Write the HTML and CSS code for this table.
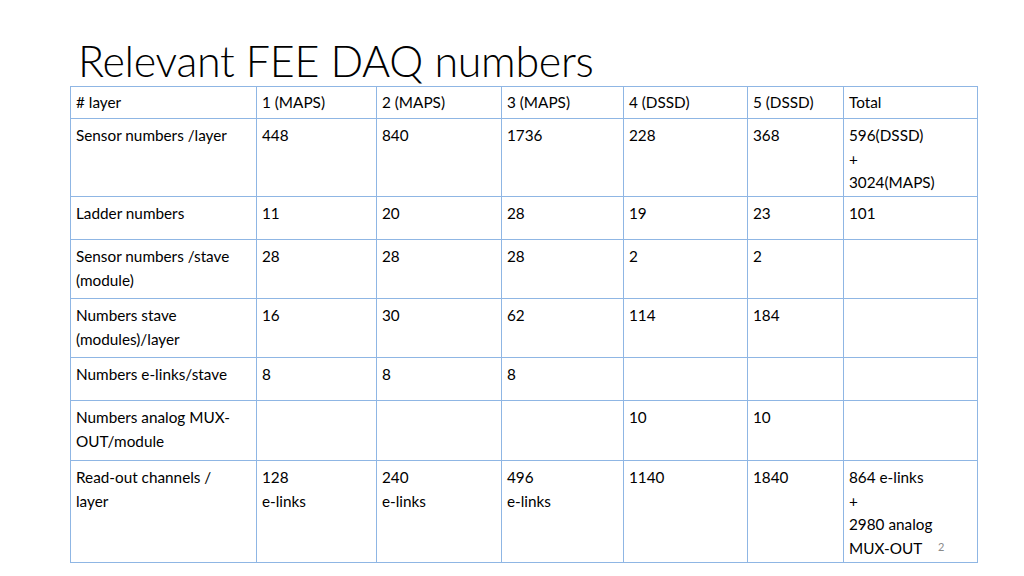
FILE: index.html
```html
<!DOCTYPE html>
<html>
<head>
<meta charset="utf-8">
<link rel="stylesheet" href="styles.css">
</head>
<body>
<div class="slide">
  <h1 class="title">Relevant FEE DAQ numbers</h1>
  <table class="daq">
    <colgroup>
      <col class="c0"><col class="c1"><col class="c2"><col class="c3"><col class="c4"><col class="c5"><col class="c6">
    </colgroup>
    <tr class="r1"><td># layer</td><td>1 (MAPS)</td><td>2 (MAPS)</td><td>3 (MAPS)</td><td>4 (DSSD)</td><td>5 (DSSD)</td><td>Total</td></tr>
    <tr class="r2"><td>Sensor numbers /layer</td><td>448</td><td>840</td><td>1736</td><td>228</td><td>368</td><td>596(DSSD)<br>+<br>3024(MAPS)</td></tr>
    <tr class="r3"><td>Ladder numbers</td><td>11</td><td>20</td><td>28</td><td>19</td><td>23</td><td>101</td></tr>
    <tr class="r4"><td>Sensor numbers /stave (module)</td><td>28</td><td>28</td><td>28</td><td>2</td><td>2</td><td></td></tr>
    <tr class="r5"><td>Numbers stave (modules)/layer</td><td>16</td><td>30</td><td>62</td><td>114</td><td>184</td><td></td></tr>
    <tr class="r6"><td>Numbers e-links/stave</td><td>8</td><td>8</td><td>8</td><td></td><td></td><td></td></tr>
    <tr class="r7"><td>Numbers analog MUX-OUT/module</td><td></td><td></td><td></td><td>10</td><td>10</td><td></td></tr>
    <tr class="r8"><td>Read-out channels /<br>layer</td><td>128<br>e-links</td><td>240<br>e-links</td><td>496<br>e-links</td><td>1140</td><td>1840</td><td>864 e-links<br>+<br>2980 analog<br>MUX-OUT</td></tr>
  </table>
  <span class="pagenum">2</span>
</div>
</body>
</html>
```
FILE: styles.css
```css
html, body {
  margin: 0;
  padding: 0;
  background: #ffffff;
}
.slide {
  position: relative;
  width: 1024px;
  height: 576px;
  overflow: hidden;
  font-family: Lato, "Open Sans", sans-serif;
  color: #000;
}
.title {
  margin: 0;
  padding: 36px 0 0 78px;
  height: 50px;
  font-family: Lato, sans-serif;
  font-weight: 300;
  font-size: 43px;
  line-height: 50px;
  letter-spacing: -0.3px;
}
.daq {
  margin-left: 70px;
  border-collapse: collapse;
  table-layout: fixed;
  width: 907px;
  border: 1.5px solid #7fa9da;
}
.daq td {
  border: 1px solid #8fb6e4;
  vertical-align: top;
  padding: 5px 3px 0 5px;
  font-size: 15.3px;
  line-height: 23.5px;
  box-sizing: border-box;
}
.c0 { width: 186px; }
.c1 { width: 120px; }
.c2 { width: 125px; }
.c3 { width: 122px; }
.c4 { width: 124px; }
.c5 { width: 96px; }
.c6 { width: 134px; }
.r1 td { padding-top: 4px; }
.r1 { height: 32px; }
.r2 { height: 78px; }
.r3 { height: 43px; }
.r4 { height: 59px; }
.r5 { height: 59px; }
.r6 { height: 43px; }
.r7 { height: 60px; }
.r8 { height: 102px; }
.pagenum {
  position: absolute;
  left: 938px;
  top: 540px;
  font-size: 11px;
  color: #8a8a8a;
}
```
